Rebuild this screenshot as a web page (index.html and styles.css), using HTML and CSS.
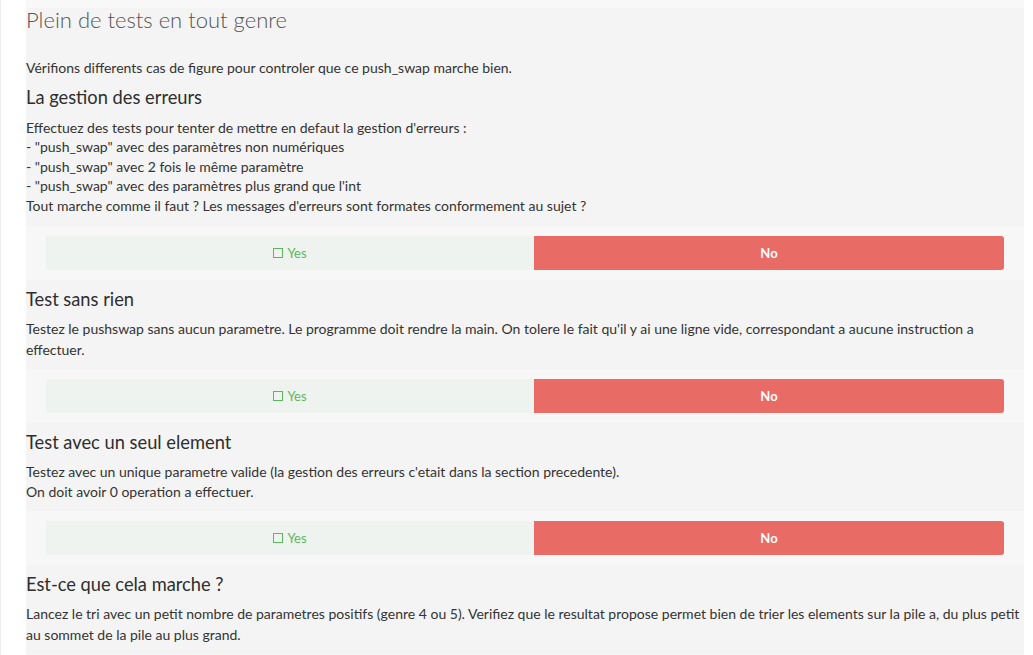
FILE: index.html
```html
<!DOCTYPE html>
<html lang="fr">
<head>
<meta charset="utf-8">
<title>Plein de tests en tout genre</title>
<link rel="stylesheet" href="styles.css">
</head>
<body>
<div class="page">
  <div class="gutter"></div>
  <main class="panel">
    <div class="topband"></div>
    <h2 class="title">Plein de tests en tout genre</h2>
    <p class="intro">Vérifions differents cas de figure pour controler que ce push_swap marche bien.</p>

    <section class="section first">
      <h3 class="heading">La gestion des erreurs</h3>
      <p class="desc tight">Effectuez des tests pour tenter de mettre en defaut la gestion d'erreurs :<br>- "push_swap" avec des paramètres non numériques<br>- "push_swap" avec 2 fois le même paramètre<br>- "push_swap" avec des paramètres plus grand que l'int<br>Tout marche comme il faut ? Les messages d'erreurs sont formates conformement au sujet ?</p>
      <div class="band">
        <div class="choice">
          <div class="yes"><span class="box"></span>Yes</div>
          <div class="no">No</div>
        </div>
      </div>
    </section>

    <section class="section">
      <h3 class="heading">Test sans rien</h3>
      <p class="desc">Testez le pushswap sans aucun parametre. Le programme doit rendre la main. On tolere le fait qu'il y ai une ligne vide, correspondant a aucune instruction a effectuer.</p>
      <div class="band">
        <div class="choice">
          <div class="yes"><span class="box"></span>Yes</div>
          <div class="no">No</div>
        </div>
      </div>
    </section>

    <section class="section">
      <h3 class="heading">Test avec un seul element</h3>
      <p class="desc short">Testez avec un unique parametre valide (la gestion des erreurs c'etait dans la section precedente).<br>On doit avoir 0 operation a effectuer.</p>
      <div class="band">
        <div class="choice">
          <div class="yes"><span class="box"></span>Yes</div>
          <div class="no">No</div>
        </div>
      </div>
    </section>

    <section class="section">
      <h3 class="heading">Est-ce que cela marche ?</h3>
      <p class="desc wide">Lancez le tri avec un petit nombre de parametres positifs (genre 4 ou 5). Verifiez que le resultat propose permet bien de trier les elements sur la pile a, du plus petit au sommet de la pile au plus grand.</p>
      <div class="band bottom"></div>
    </section>
  </main>
  <div class="rightgutter"></div>
</div>
</body>
</html>
```

FILE: styles.css
```css
html, body {
  margin: 0;
  padding: 0;
  background: #ffffff;
  overflow: hidden;
}

body {
  font-family: Lato, "Open Sans", "Liberation Sans", sans-serif;
  color: #333333;
}

.page {
  display: flex;
  height: 655px;
  overflow: hidden;
}

.gutter {
  width: 26px;
  flex: 0 0 26px;
  background: #ffffff;
  border-left: 1px solid #ececec;
  box-sizing: border-box;
}

.rightgutter {
  flex: 1 1 auto;
  background: #ffffff;
}

.panel {
  width: 998px;
  flex: 0 0 998px;
  background: #f4f4f4;
}

.topband {
  height: 8px;
  background: #f8f8f8;
}

.title {
  margin: 0;
  font-size: 22px;
  font-weight: 300;
  line-height: 24px;
  color: #555555;
}

.intro {
  margin: 26px 0 0;
  font-size: 14px;
  line-height: 20px;
}

.heading {
  margin: 8px 0 0;
  font-size: 18.3px;
  font-weight: 400;
  line-height: 22px;
  color: #2e2e2e;
}

.desc {
  margin: 9px 0 0;
  font-size: 14px;
  line-height: 20.5px;
}

.desc.tight {
  margin-top: 10px;
  line-height: 19.4px;
}

.desc.short {
  line-height: 20px;
}

.desc.wide {
  margin-right: -8px;
}

.band {
  margin-top: 9px;
  background: #f7f7f7;
  padding: 10px 20px;
}

.first .band {
  margin-top: 11px;
}

.band.bottom {
  height: 40px;
}

.choice {
  display: flex;
  height: 34px;
}

.yes {
  width: 488px;
  display: flex;
  align-items: center;
  justify-content: center;
  background: #eff3ef;
  color: #5cb85c;
  font-size: 13px;
}

.box {
  width: 8px;
  height: 8px;
  border: 1.5px solid #5cb85c;
  margin-right: 4px;
}

.no {
  flex: 1;
  display: flex;
  align-items: center;
  justify-content: center;
  background: #e96b65;
  color: #ffffff;
  font-size: 13px;
  font-weight: 700;
  border-radius: 0 3px 3px 0;
}
```
